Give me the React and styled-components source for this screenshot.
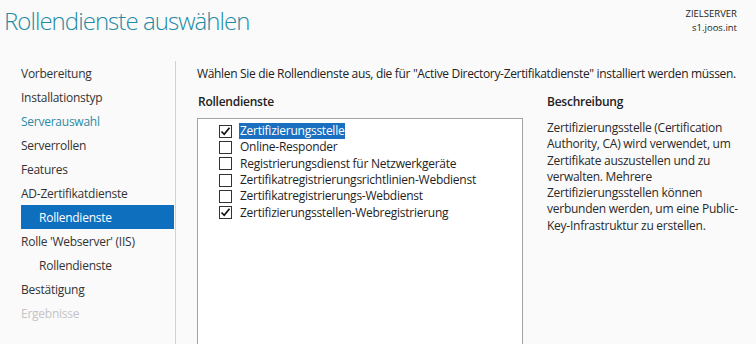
import React from "react";
import styled, { createGlobalStyle } from "styled-components";

const Global = createGlobalStyle`
  html, body { margin: 0; padding: 0; background: #fafafa; }
  body { font-family: "Open Sans", "Noto Sans", sans-serif; color: #1e1e1e; }
  * { box-sizing: border-box; }
`;

const Page = styled.div`
  width: 756px;
  height: 344px;
  overflow: hidden;
  display: flex;
  flex-direction: column;
`;

const Header = styled.header`
  height: 61px;
  display: flex;
  justify-content: space-between;
  align-items: flex-start;
  padding: 0 19px 0 4px;
`;

const Title = styled.h1`
  margin: 5px 0 0;
  font-size: 24px;
  font-weight: 300;
  letter-spacing: -0.95px;
  color: #238aa6;
  line-height: 32px;
`;

const Server = styled.div`
  margin-top: 7px;
  text-align: right;
  font-size: 9.5px;
  line-height: 14px;
  color: #222;
`;

const Body = styled.div`
  flex: 1;
  display: flex;
  min-height: 0;
`;

const Nav = styled.nav`
  width: 176px;
  flex: none;
  border-right: 1px solid #d2d2d2;
  padding: 0 1px 0 21px;
  display: flex;
  flex-direction: column;
`;

const NavItem = styled.div`
  height: 24px;
  display: flex;
  align-items: center;
  padding-left: ${(p) => (p.$sub ? 18 : 0)}px;
  font-size: 12px;
  letter-spacing: -0.25px;
  color: ${(p) => (p.$active ? "#ffffff" : p.$disabled ? "#c4c4c4" : p.$done ? "#2a8aa6" : "#333333")};
  background: ${(p) => (p.$active ? "#0f6fbf" : "transparent")};
`;

const Main = styled.main`
  flex: 1;
  padding: 5px 0 0 21px;
  display: flex;
  flex-direction: column;
  min-width: 0;
`;

const Intro = styled.p`
  margin: 0;
  font-size: 12px;
  letter-spacing: -0.33px;
  line-height: 16px;
  color: #222;
`;

const Columns = styled.div`
  margin-top: 12px;
  display: flex;
  gap: 23px;
  flex: 1;
  min-height: 0;
`;

const ListCol = styled.section`
  width: 326px;
  display: flex;
  flex-direction: column;
`;

const DescCol = styled.section`
  flex: 1;
  display: flex;
  flex-direction: column;
`;

const ColTitle = styled.h2`
  margin: 0 0 0 1px;
  font-size: 12px;
  font-weight: 600;
  letter-spacing: -0.25px;
  line-height: 16px;
  color: #222;
`;

const ListBox = styled.div`
  margin-top: 8px;
  flex: 1;
  background: #fff;
  border: 1px solid #a3a3a3;
  border-bottom: none;
  padding: 4px 0 0 21px;
`;

const Row = styled.div`
  height: 16.3px;
  display: flex;
  align-items: center;
  gap: 7px;
`;

const Box = styled.span`
  width: 13px;
  height: 13px;
  flex: none;
  border: 1px solid #333;
  background: #fff;
  display: flex;
  align-items: center;
  justify-content: center;
`;

const Label = styled.span`
  font-size: 12px;
  letter-spacing: -0.25px;
  line-height: 16px;
  padding: 0 1px;
  color: ${(p) => (p.$selected ? "#fff" : "#1e1e1e")};
  background: ${(p) => (p.$selected ? "#1b6fc0" : "transparent")};
`;

const Desc = styled.p`
  margin: 10px 0 0 1px;
  font-size: 12px;
  letter-spacing: -0.25px;
  line-height: 16.3px;
  color: #2a2a2a;
  white-space: pre-line;
`;

const Check = () => (
  <svg width="11" height="11" viewBox="0 0 11 11">
    <path d="M1.5 5.5 L4.2 8.3 L9.5 1.8" fill="none" stroke="#111" strokeWidth="1.7" />
  </svg>
);

const navItems = [
  { t: "Vorbereitung" },
  { t: "Installationstyp" },
  { t: "Serverauswahl", done: true },
  { t: "Serverrollen" },
  { t: "Features" },
  { t: "AD-Zertifikatdienste" },
  { t: "Rollendienste", sub: true, active: true },
  { t: "Rolle 'Webserver' (IIS)" },
  { t: "Rollendienste", sub: true },
  { t: "Bestätigung" },
  { t: "Ergebnisse", disabled: true },
];

const services = [
  { t: "Zertifizierungsstelle", checked: true, selected: true },
  { t: "Online-Responder" },
  { t: "Registrierungsdienst für Netzwerkgeräte" },
  { t: "Zertifikatregistrierungsrichtlinien-Webdienst" },
  { t: "Zertifikatregistrierungs-Webdienst" },
  { t: "Zertifizierungsstellen-Webregistrierung", checked: true },
];

export default function App() {
  return (
    <Page>
      <Global />
      <Header>
        <Title>Rollendienste auswählen</Title>
        <Server>
          <div>ZIELSERVER</div>
          <div>s1.joos.int</div>
        </Server>
      </Header>
      <Body>
        <Nav>
          {navItems.map((n, i) => (
            <NavItem key={i} $sub={n.sub} $active={n.active} $disabled={n.disabled} $done={n.done}>
              {n.t}
            </NavItem>
          ))}
        </Nav>
        <Main>
          <Intro>
            Wählen Sie die Rollendienste aus, die für "Active Directory-Zertifikatdienste" installiert werden müssen.
          </Intro>
          <Columns>
            <ListCol>
              <ColTitle>Rollendienste</ColTitle>
              <ListBox>
                {services.map((s, i) => (
                  <Row key={i}>
                    <Box>{s.checked && <Check />}</Box>
                    <Label $selected={s.selected}>{s.t}</Label>
                  </Row>
                ))}
              </ListBox>
            </ListCol>
            <DescCol>
              <ColTitle>Beschreibung</ColTitle>
              <Desc>
                {"Zertifizierungsstelle (Certification\nAuthority, CA) wird verwendet, um\nZertifikate auszustellen und zu\nverwalten. Mehrere\nZertifizierungsstellen können\nverbunden werden, um eine Public-\nKey-Infrastruktur zu erstellen."}
              </Desc>
            </DescCol>
          </Columns>
        </Main>
      </Body>
    </Page>
  );
}
